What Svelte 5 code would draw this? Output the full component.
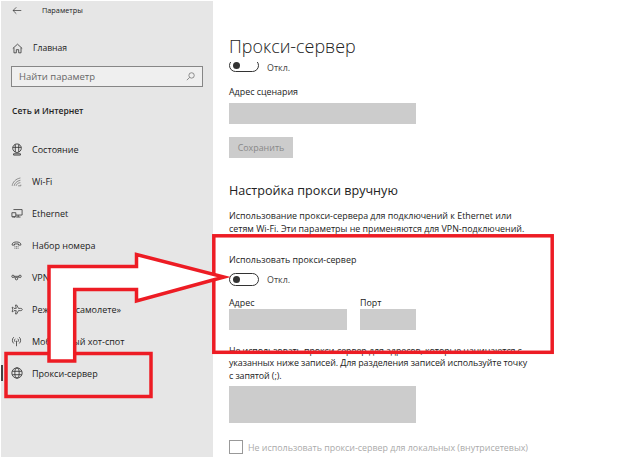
<script>
  const navItems = [
    { id: 'status', label: 'Состояние' },
    { id: 'wifi', label: 'Wi-Fi' },
    { id: 'ethernet', label: 'Ethernet' },
    { id: 'dialup', label: 'Набор номера' },
    { id: 'vpn', label: 'VPN' },
    { id: 'plane', label: 'Режим «в самолете»' },
    { id: 'hotspot', label: 'Мобильный хот-спот' },
    { id: 'proxy', label: 'Прокси-сервер', active: true }
  ];
</script>

<div class="window">
  <aside class="sidebar">
    <div class="titlebar">
      <svg class="back" width="10" height="9" viewBox="0 0 14 12"><path d="M13 6H1.500M6 1.500 1.500 6 6 10.500" /></svg>
      <span>Параметры</span>
    </div>

    <div class="home">
      <svg width="11" height="11" viewBox="0 0 14 14"><path d="M1 7 7 1.500 13 7M2.500 6v6.500h3V8.500h3v4h3V6" /></svg>
      <span>Главная</span>
    </div>

    <div class="search">
      <span>Найти параметр</span>
      <svg width="9" height="9" viewBox="0 0 11 11"><circle cx="6.800" cy="4.200" r="3.300" /><path d="M4.400 6.600 1 10" /></svg>
    </div>

    <div class="section">Сеть и Интернет</div>

    <nav>
      {#each navItems as item}
        <div class="nav-item" class:active={item.active}>
          <span class="icon">
            {#if item.id === 'status'}
              <svg width="12" height="13" viewBox="0 0 14 15"><circle cx="7" cy="6" r="5" /><path d="M5 1.500v9M9 1.500v9M2 5h10M3 12.500h8v1.500H3z" /></svg>
            {:else if item.id === 'wifi'}
              <svg class="soft" width="11" height="11" viewBox="0 0 14 14"><path d="M1.500 12.500C2 8 6 3.500 12 2.500M4 12.500C4.500 9.500 7.500 6 12 5.500M6.500 12.500C7 10.500 9 8.500 12 8.500M9 12.500h3.500V11" /></svg>
            {:else if item.id === 'ethernet'}
              <svg width="12" height="11" viewBox="0 0 15 14"><path d="M3 2h11v7H6M1 6h5v5H1zM9 9v2.500M6.500 11.500H12M2.500 11v1.500M4.500 11v1.500" /></svg>
            {:else if item.id === 'dialup'}
              <svg width="11" height="11" viewBox="0 0 14 14"><path d="M1.500 5.500C1.500 1.500 12.500 1.500 12.500 5.500V6.500H9.500V5H4.500V6.500H1.500zM4.500 8.500h1M6.500 8.500h1M8.500 8.500h1M4.500 10.500h1M6.500 10.500h1M8.500 10.500h1" /></svg>
            {:else if item.id === 'vpn'}
              <svg width="11" height="11" viewBox="0 0 14 14"><circle cx="2.500" cy="5.500" r="1.500" /><circle cx="11.500" cy="5.500" r="1.500" /><circle cx="7" cy="8.500" r="1.500" /><path d="M4 5.500h6M4 6.500l2 1M10 6.500l-2 1" /></svg>
            {:else if item.id === 'plane'}
              <svg width="12" height="11" viewBox="0 0 16 14"><path d="M15 7c0-1-1-1.500-2-1.500H10L7.500 1H6l1 4.500H4L2.500 4H1.500l.8 3-.8 3h1L4 8.500h3L6 13h1.500L10 8.500h3c1 0 2-.5 2-1.500z" /></svg>
            {:else if item.id === 'hotspot'}
              <svg width="11" height="11" viewBox="0 0 14 14"><path d="M7 6v7M5.500 3.500a2.500 2.500 0 0 0 0 4M8.500 3.500a2.500 2.500 0 0 1 0 4M3.500 1.500a5.500 5.500 0 0 0 0 8M10.500 1.500a5.500 5.500 0 0 1 0 8" /></svg>
            {:else}
              <svg width="12" height="12" viewBox="0 0 14 14"><circle cx="7" cy="7" r="6" /><ellipse cx="7" cy="7" rx="2.500" ry="6" /><path d="M1.500 5h11M1.500 9h11" /></svg>
            {/if}
          </span>
          <span>{item.label}</span>
        </div>
      {/each}
    </nav>
  </aside>

  <main class="content">
    <h1>Прокси-сервер</h1>
    <div class="toggle-row clipped">
      <div class="cut"><span class="toggle"><i></i></span></div>
      <span class="muted">Откл.</span>
    </div>

    <div class="label script-label">Адрес сценария</div>
    <div class="field wide"></div>
    <div class="save">Сохранить</div>

    <h2>Настройка прокси вручную</h2>
    <p class="note">Использование прокси-сервера для подключений к Ethernet или сетям Wi-Fi. Эти параметры не применяются для VPN-подключений.</p>

    <div class="label use-label">Использовать прокси-сервер</div>
    <div class="toggle-row">
      <span class="toggle"><i></i></span>
      <span class="muted">Откл.</span>
    </div>

    <div class="address">
      <div>
        <div class="label">Адрес</div>
        <div class="field addr"></div>
      </div>
      <div>
        <div class="label">Порт</div>
        <div class="field port"></div>
      </div>
    </div>

    <p class="note exceptions">Не использовать прокси-сервер для адресов, которые начинаются с<br />указанных ниже записей. Для разделения записей используйте точку<br />с запятой (;).</p>
    <div class="field area"></div>

    <div class="check">
      <span class="box"></span>
      <span>Не использовать прокси-сервер для локальных (внутрисетевых)</span>
    </div>
  </main>

  <!-- red annotations pasted on top of the screenshot -->
  <svg class="marks" width="624" height="459" viewBox="0 0 624 459">
    <rect x="213.800" y="235.800" width="338.400" height="116.500" />
    <rect x="6" y="353.500" width="145" height="43" />
    <path class="arrow" d="M49 266.500H136.500V254.500L224 277 136.500 301V289.500H74.700V361H49Z" />
  </svg>
</div>

<style>
  :global(body) {
    margin: 0;
    background: #fff;
  }

  .window {
    position: relative;
    display: flex;
    width: 624px;
    height: 459px;
    overflow: hidden;
    font-family: "Open Sans", "Noto Sans", sans-serif;
    font-size: 8.900px;
    color: #222;
  }

  .sidebar {
    width: 212px;
    height: 456px;
    margin: 1px 0 0 1px;
    background: #e6e6e6;
    flex-shrink: 0;
  }

  .sidebar svg {
    fill: none;
    stroke: #333;
    stroke-width: 1;
  }

  .sidebar svg.soft {
    stroke: #777;
  }

  .titlebar {
    display: flex;
    align-items: center;
    gap: 20px;
    padding: 1px 0 0 11px;
    height: 16px;
    font-size: 7.300px;
  }

  .home {
    display: flex;
    align-items: center;
    gap: 10px;
    margin-top: 24px;
    padding-left: 11px;
    font-size: 8.600px;
  }

  .search {
    display: flex;
    align-items: center;
    justify-content: space-between;
    box-sizing: border-box;
    width: 192px;
    height: 21px;
    margin: 12px 0 0 10px;
    padding: 0 7px;
    border: 1.500px solid #868686;
    background: #efefef;
    color: #666;
    font-size: 9.500px;
  }

  .search svg {
    stroke: #777;
  }

  .section {
    margin: 18px 0 0 11px;
    font-weight: 600;
    font-size: 8.500px;
  }

  nav {
    margin-top: 17px;
  }

  .nav-item {
    position: relative;
    display: flex;
    align-items: center;
    height: 32px;
    padding-left: 10px;
    font-size: 9px;
  }

  .nav-item .icon {
    display: flex;
    width: 21px;
  }

  .nav-item.active::before {
    content: "";
    position: absolute;
    left: 0;
    top: 8px;
    width: 2px;
    height: 16px;
    background: #444;
  }

  .content {
    flex: 1;
    padding-left: 16px;
  }

  h1 {
    margin: 34px 0 0;
    font-size: 17.900px;
    font-weight: 300;
    line-height: 24px;
    color: #222;
  }

  .toggle-row {
    display: flex;
    align-items: center;
    gap: 8px;
    height: 14px;
  }

  .toggle {
    display: flex;
    align-items: center;
    flex-shrink: 0;
    box-sizing: border-box;
    width: 30px;
    height: 13px;
    padding-left: 3px;
    border: 1.500px solid #333;
    border-radius: 7px;
  }

  .toggle i {
    width: 7px;
    height: 7px;
    border-radius: 50%;
    background: #333;
  }

  .cut {
    height: 10px;
    overflow: hidden;
    align-self: flex-end;
    display: flex;
    align-items: flex-end;
  }

  .clipped {
    height: 10px;
    margin-top: 4px;
  }

  .muted {
    color: #444;
  }

  .label {
    line-height: 13px;
  }

  .script-label {
    margin-top: 13px;
  }

  .field {
    background: #ccc;
  }

  .wide {
    width: 187px;
    height: 21px;
    margin-top: 5px;
  }

  .save {
    display: flex;
    align-items: center;
    justify-content: center;
    width: 64px;
    height: 21px;
    margin-top: 13px;
    background: #ccc;
    color: #888;
  }

  h2 {
    margin: 23px 0 0;
    font-size: 12.600px;
    font-weight: 400;
    line-height: 20px;
    color: #222;
  }

  .note {
    width: 305px;
    margin: 9px 0 0;
    line-height: 12.500px;
  }

  .use-label {
    margin-top: 17.500px;
  }

  .use-label + .toggle-row {
    margin-top: 7px;
  }

  .address {
    display: flex;
    gap: 13px;
    margin-top: 9px;
  }

  .addr {
    width: 118px;
    height: 21px;
  }

  .port {
    width: 56px;
    height: 21px;
  }

  .exceptions {
    width: 330px;
    margin-top: 15px;
    letter-spacing: -0.080px;
  }

  .area {
    width: 187px;
    height: 37px;
    margin-top: 4px;
  }

  .check {
    display: flex;
    align-items: center;
    gap: 5px;
    margin-top: 17px;
    color: #aaa;
  }

  .box {
    box-sizing: border-box;
    width: 14px;
    height: 14px;
    border: 1.500px solid #999;
  }

  .marks {
    position: absolute;
    left: 0;
    top: 0;
    fill: none;
    stroke: #ed1c24;
    stroke-width: 3.500;
  }

  .marks .arrow {
    fill: #fff;
  }
</style>
